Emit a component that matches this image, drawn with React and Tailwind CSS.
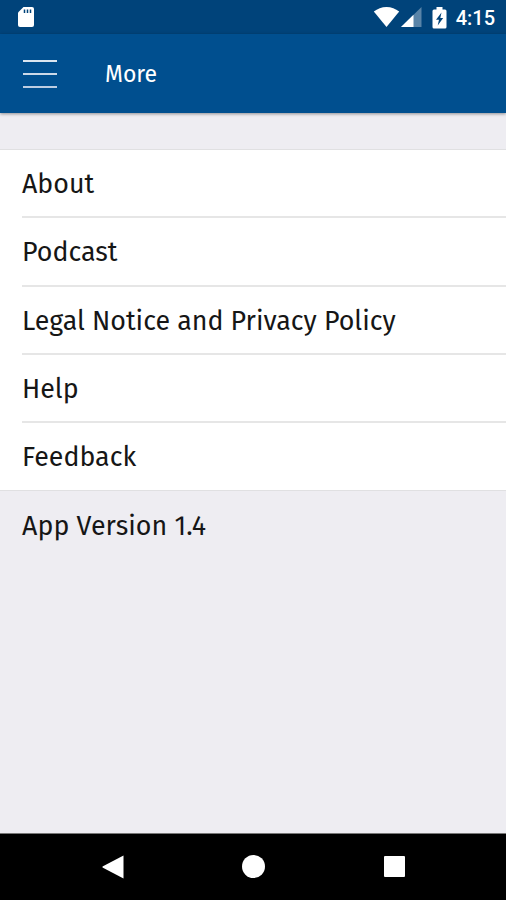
const items = ["About", "Podcast", "Legal Notice and Privacy Policy", "Help", "Feedback"]

function StatusBar() {
  return (
    <div className="h-[34px] shrink-0 bg-[#00437a] flex items-center pl-[17px] pr-[11px] text-white">
      {/* SD card */}
      <svg className="mb-px" width="18" height="22" viewBox="0 0 18 22">
        <path d="M6.500 1H15a2 2 0 0 1 2 2v16a2 2 0 0 1-2 2H3a2 2 0 0 1-2-2V6.500z" fill="#fff" />
        <path d="M7.500 3.500v3.500M10.500 3.500v3.500M13.500 3.500v3.500" stroke="#00437a" strokeWidth="1.5" />
      </svg>

      <div className="ml-auto flex items-center">
        {/* Wifi */}
        <svg width="27" height="22" viewBox="0 0 27 22">
          <path d="M13.500 21 .8 5.600C4.400 2.700 8.700 1 13.500 1s9.100 1.700 12.700 4.600z" fill="#fff" />
        </svg>
        {/* Signal */}
        <svg className="ml-px" width="21" height="22" viewBox="0 0 21 22">
          <path d="M0 21 20.500 1v20z" fill="#fff" fillOpacity=".35" />
          <path d="M0 21 12.500 8.800V21z" fill="#fff" />
        </svg>
        {/* Battery */}
        <svg className="ml-[10px] mt-px" width="15" height="22" viewBox="0 0 15 22">
          <path d="M4.500 0h6v2.500H13A1.500 1.500 0 0 1 14.500 4v16a1.500 1.500 0 0 1-1.500 1.500H2A1.500 1.500 0 0 1 .5 20V4A1.500 1.500 0 0 1 2 2.500h2.500z" fill="#fff" />
          <path d="M9.500 5.500 4 12.800h3l-1.300 5.700L11.200 11H8.300z" fill="#00437a" />
        </svg>
        <span className="ml-[9px] mt-px font-[Roboto,sans-serif] font-medium text-[20px] leading-5">4:15</span>
      </div>
    </div>
  )
}

function Header() {
  return (
    <header className="relative h-[79px] shrink-0 bg-[#004f8f] flex items-center pl-[23px] shadow-[0_1px_3px_rgba(0,0,0,0.4)]">
      <div className="flex flex-col gap-[11px] w-[34px] pt-px">
        <span className="h-[2px] bg-[#dbe6f0]" />
        <span className="h-[2px] bg-[#ccd9e8]" />
        <span className="h-[2px] bg-[#bccde2]" />
      </div>
      <h1 className="ml-[48px] pt-[2px] text-[23px] leading-none text-white">More</h1>
    </header>
  )
}

function NavBar() {
  return (
    <nav className="h-[67px] shrink-0 bg-black border-t border-[#777] flex items-center pb-px pl-[102px]">
      <svg width="22" height="24" viewBox="0 0 22 24">
        <path d="M21.500.5v23L.5 12.600v-1.200z" fill="#fff" />
      </svg>
      <span className="ml-[118px] size-[23px] rounded-full bg-white" />
      <span className="ml-[119px] size-[21px] rounded-[1px] bg-white" />
    </nav>
  )
}

export default function App() {
  return (
    <div className="h-[900px] w-[506px] flex flex-col overflow-hidden bg-[#eeedf2] font-['Fira_Sans','Noto_Sans',sans-serif] text-[#161616]">
      <StatusBar />
      <Header />

      <main className="flex-1 pt-[36px] text-[26.800px]">
        <ul className="bg-white border-y border-[#e0e0e2] pl-[22px]">
          {items.map((item) => (
            <li
              key={item}
              className="h-[68.300px] last:h-[67px] flex items-center pt-[2.500px] last:pt-[2px] border-b-2 border-[#e6e6e6] last:border-b-0 leading-none"
            >
              {item}
            </li>
          ))}
        </ul>
        <p className="h-[68px] pl-[22px] pt-[2px] flex items-center leading-none tracking-[0.08px]">App Version 1.4</p>
      </main>

      <NavBar />
    </div>
  )
}
